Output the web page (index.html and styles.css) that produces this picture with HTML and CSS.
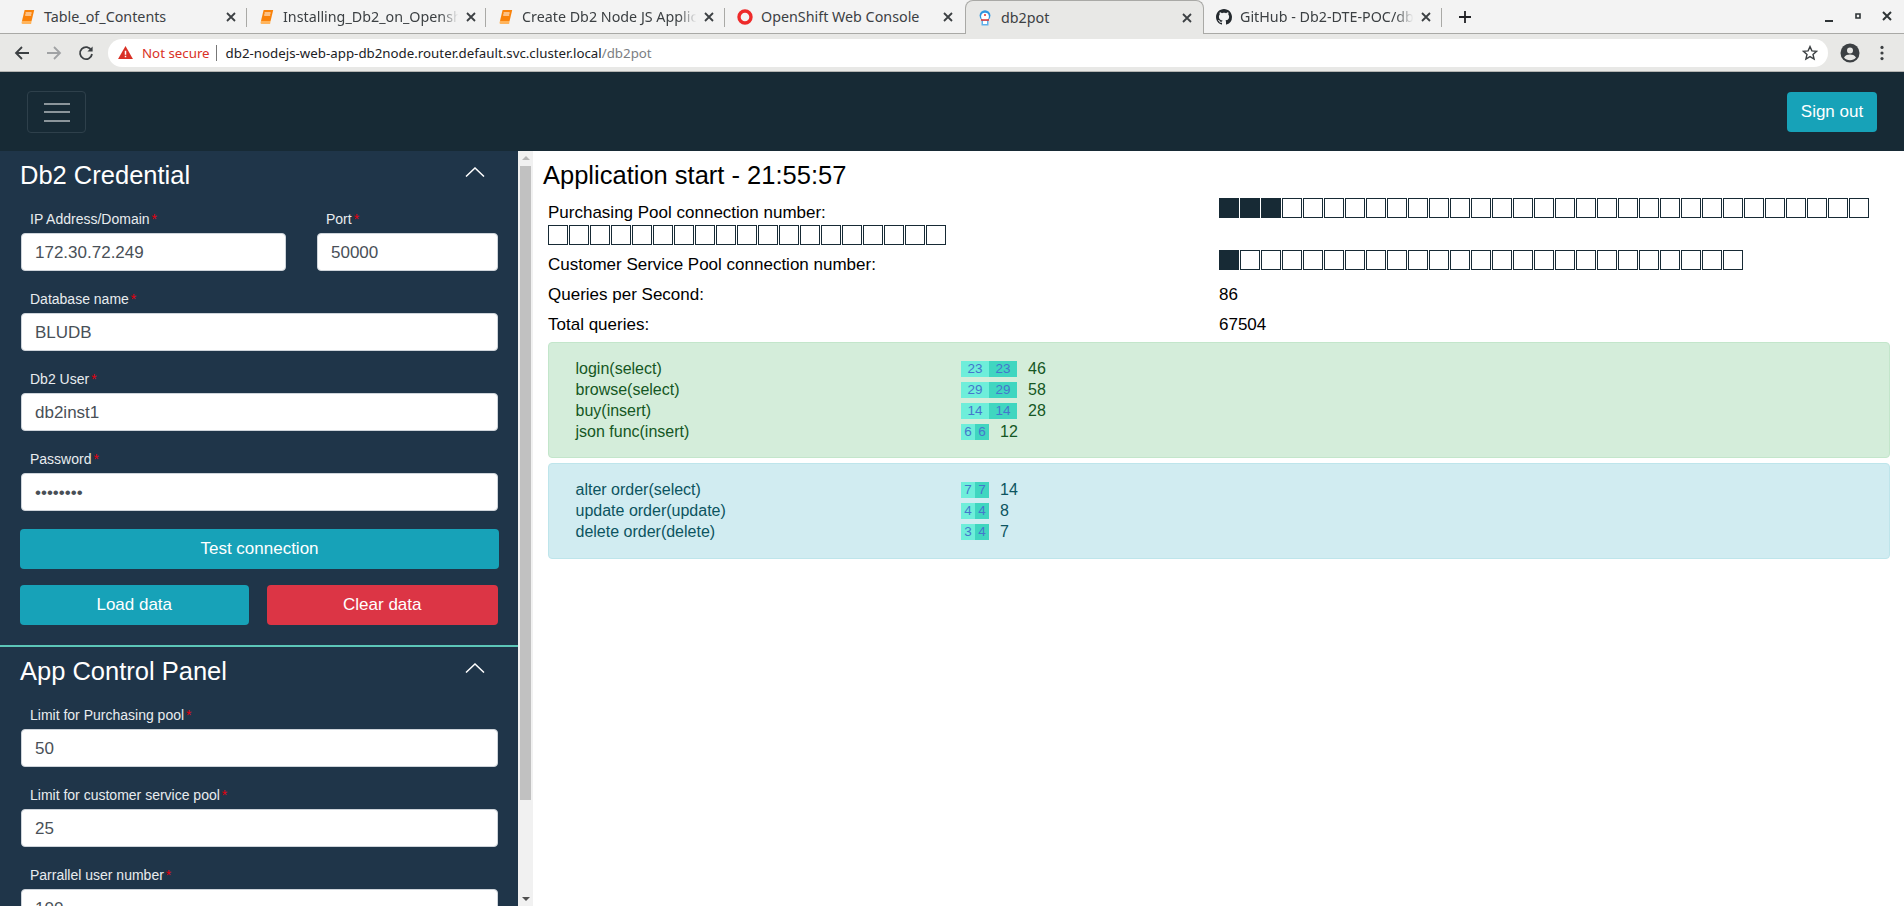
FILE: index.html
```html
<!DOCTYPE html>
<html lang="en">
<head>
  <meta charset="UTF-8" />
  <title>db2pot</title>
  <link rel="stylesheet" href="styles.css">
</head>
<body>
  <svg class="defs" width="0" height="0">
    <symbol id="book" viewBox="0 0 16 16">
      <path d="M4.600 1h9.600l-2.600 11H2z" fill="#f9820a"/>
      <path d="M2 12h9.600l-.5 3H2.600C1.400 15 1.300 13 2 12z" fill="#ffb45c"/>
      <path d="M5.600 4h6M5.200 6h6" stroke="#fff" stroke-width="1"/>
    </symbol>
    <symbol id="close" viewBox="0 0 10 10">
      <path d="M1 1l8 8M9 1l-8 8" stroke="#3c4043" stroke-width="1.800"/>
    </symbol>
    <symbol id="chevron" viewBox="0 0 20 10">
      <path d="M1 9.500L10 1l9 8.500" fill="none" stroke="#fff" stroke-width="1.500"/>
    </symbol>
  </svg>

  <div class="tabstrip">
    <div class="tab">
      <svg class="tab-icon"><use href="#book"/></svg>
      <span class="tab-title">Table_of_Contents</span>
      <svg class="tab-close"><use href="#close"/></svg>
    </div>
    <div class="tab">
      <svg class="tab-icon"><use href="#book"/></svg>
      <span class="tab-title tab-fade">Installing_Db2_on_Opensh</span>
      <svg class="tab-close"><use href="#close"/></svg>
    </div>
    <div class="tab">
      <svg class="tab-icon"><use href="#book"/></svg>
      <span class="tab-title tab-fade">Create Db2 Node JS Applic</span>
      <svg class="tab-close"><use href="#close"/></svg>
    </div>
    <div class="tab tab-nosep">
      <svg class="tab-icon" viewBox="0 0 16 16"><circle cx="8" cy="8" r="6" fill="none" stroke="#ee2a2a" stroke-width="3.400"/></svg>
      <span class="tab-title">OpenShift Web Console</span>
      <svg class="tab-close"><use href="#close"/></svg>
    </div>
    <div class="tab tab-active">
      <svg class="tab-icon" viewBox="0 0 16 16">
        <path d="M4.500 10h7v5.500h-7z" fill="#5fb0ea"/>
        <path d="M6 10.500h4V14H6z" fill="#fff"/>
        <circle cx="8" cy="5.600" r="5.400" fill="#2f96e0"/>
        <circle cx="8" cy="6.600" r="3.900" fill="#fff"/>
        <path d="M4 10h8" stroke="#e0312f" stroke-width="1.500"/>
        <circle cx="8" cy="5" r="1" fill="#e0312f"/>
      </svg>
      <span class="tab-title">db2pot</span>
      <svg class="tab-close"><use href="#close"/></svg>
    </div>
    <div class="tab tab-github">
      <svg class="tab-icon" viewBox="0 0 16 16"><path fill="#24292e" d="M8 0C3.58 0 0 3.58 0 8c0 3.54 2.29 6.53 5.47 7.59.4.07.55-.17.55-.38 0-.19-.01-.82-.01-1.49-2.01.37-2.53-.49-2.69-.94-.09-.23-.48-.94-.82-1.13-.28-.15-.68-.52-.01-.53.63-.01 1.08.58 1.23.82.72 1.21 1.87.87 2.33.66.07-.52.28-.87.51-1.07-1.78-.2-3.64-.89-3.64-3.95 0-.87.31-1.59.82-2.15-.08-.2-.36-1.02.08-2.12 0 0 .67-.21 2.2.82.64-.18 1.32-.27 2-.27.68 0 1.36.09 2 .27 1.53-1.04 2.2-.82 2.2-.82.44 1.1.16 1.92.08 2.12.51.56.82 1.27.82 2.15 0 3.07-1.87 3.75-3.65 3.95.29.25.54.73.54 1.48 0 1.07-.01 1.93-.01 2.2 0 .21.15.46.55.38A8.013 8.013 0 0016 8c0-4.42-3.58-8-8-8z"/></svg>
      <span class="tab-title tab-fade">GitHub - Db2-DTE-POC/db</span>
      <svg class="tab-close"><use href="#close"/></svg>
    </div>
    <svg class="new-tab" viewBox="0 0 12 12"><path d="M6 0v12M0 6h12" stroke="#202124" stroke-width="1.800"/></svg>
    <div class="window-controls">
      <svg class="win-min" viewBox="0 0 8 2"><path d="M0 1h8" stroke="#2e3436" stroke-width="2"/></svg>
      <svg class="win-max" viewBox="0 0 6 6"><path d="M1 1h4v4H1z" fill="none" stroke="#2e3436" stroke-width="1.600"/></svg>
      <svg class="win-close" viewBox="0 0 10 10"><path d="M1 1l8 8M9 1l-8 8" stroke="#2e3436" stroke-width="2"/></svg>
    </div>
  </div>

  <div class="toolbar">
    <svg class="nav-icon" viewBox="0 0 16 16"><path d="M15 8H2M8 2L2 8l6 6" fill="none" stroke="#3c4043" stroke-width="1.800"/></svg>
    <svg class="nav-icon" viewBox="0 0 16 16"><path d="M1 8h13M8 2l6 6-6 6" fill="none" stroke="#a0a2a4" stroke-width="1.800"/></svg>
    <svg class="nav-icon" viewBox="0 0 16 16"><path d="M13.400 5.400A6 6 0 1 0 14 9" fill="none" stroke="#3c4043" stroke-width="1.800"/><path d="M14.600 1.400v5.200H9.400z" fill="#3c4043"/></svg>
    <div class="urlbar">
      <svg class="warn-icon" viewBox="0 0 16 14"><path d="M8 0l8 14H0z" fill="#d93025"/><path d="M7.200 5h1.600v4.400H7.200zM7.200 10.400h1.600V12H7.200z" fill="#fff"/></svg>
      <span class="not-secure">Not secure</span>
      <span class="url-sep"></span>
      <span class="url">db2-nodejs-web-app-db2node.router.default.svc.cluster.local<span class="url-path">/db2pot</span></span>
      <svg class="star-icon" viewBox="0 0 16 16"><path d="M8 1.600l1.900 4.300 4.700.4-3.600 3.100 1.100 4.600L8 11.600 3.900 14 5 9.400 1.400 6.300l4.700-.4z" fill="none" stroke="#3c4043" stroke-width="1.400"/></svg>
    </div>
    <svg class="avatar-icon" viewBox="0 0 20 20"><circle cx="10" cy="10" r="9.500" fill="#3c4043"/><circle cx="10" cy="7.400" r="3" fill="#e8e8e6"/><path d="M4 14.400c1.400-2.400 3.800-3 6-3s4.600.6 6 3c-1.400 1.800-3.600 2.800-6 2.800s-4.600-1-6-2.800z" fill="#e8e8e6"/></svg>
    <svg class="menu-icon" viewBox="0 0 4 16"><circle cx="2" cy="2.400" r="1.600" fill="#3c4043"/><circle cx="2" cy="8" r="1.600" fill="#3c4043"/><circle cx="2" cy="13.600" r="1.600" fill="#3c4043"/></svg>
  </div>

  <nav class="navbar">
    <button class="toggler"><span></span><span></span><span></span></button>
    <button class="btn btn-info signout">Sign out</button>
  </nav>

  <div class="layout">
    <aside class="sidebar">
      <div class="sidebar-scroll">
        <section class="panel panel-credential">
          <div class="panel-head">
            <h3>Db2 Credential</h3>
            <svg class="chevron"><use href="#chevron"/></svg>
          </div>
          <div class="field-row">
            <div class="field field-ip">
              <label>IP Address/Domain<em>*</em></label>
              <input type="text" value="172.30.72.249" />
            </div>
            <div class="field field-port">
              <label>Port<em>*</em></label>
              <input type="text" value="50000" />
            </div>
          </div>
          <div class="field">
            <label>Database name<em>*</em></label>
            <input type="text" value="BLUDB" />
          </div>
          <div class="field">
            <label>Db2 User<em>*</em></label>
            <input type="text" value="db2inst1" />
          </div>
          <div class="field">
            <label>Password<em>*</em></label>
            <input type="password" value="password" />
          </div>
          <button class="btn btn-info btn-wide">Test connection</button>
          <div class="btn-row">
            <button class="btn btn-info btn-load">Load data</button>
            <button class="btn btn-danger btn-clear">Clear data</button>
          </div>
        </section>
        <section class="panel panel-control">
          <div class="panel-head">
            <h3>App Control Panel</h3>
            <svg class="chevron"><use href="#chevron"/></svg>
          </div>
          <div class="field">
            <label>Limit for Purchasing pool<em>*</em></label>
            <input type="text" value="50" />
          </div>
          <div class="field">
            <label>Limit for customer service pool<em>*</em></label>
            <input type="text" value="25" />
          </div>
          <div class="field">
            <label>Parrallel user number<em>*</em></label>
            <input type="text" value="100" />
          </div>
        </section>
      </div>
      <div class="scrollbar">
        <span class="arrow-up"></span>
        <span class="thumb"></span>
        <span class="arrow-down"></span>
      </div>
    </aside>

    <main class="content">
      <h3 class="app-title">Application start - 21:55:57</h3>

      <div class="stat stat-purchasing">
        <div class="stat-left">
          <div class="stat-label">Purchasing Pool connection number:</div>
          <div class="boxes" id="poolOverflow"></div>
        </div>
        <div class="stat-right"><div class="boxes" id="poolMain"></div></div>
      </div>
      <div class="stat stat-text">
        <div class="stat-left">Customer Service Pool connection number:</div>
        <div class="stat-right"><div class="boxes" id="poolService"></div></div>
      </div>
      <div class="stat stat-text">
        <div class="stat-left">Queries per Second:</div>
        <div class="stat-right">86</div>
      </div>
      <div class="stat stat-text">
        <div class="stat-left">Total queries:</div>
        <div class="stat-right">67504</div>
      </div>

      <div class="alert alert-success">
        <div class="tx-row"><span class="tx-name">login(select)</span><span class="cell cell-w light">23</span><span class="cell cell-w dark">23</span><span class="tx-total">46</span></div>
        <div class="tx-row"><span class="tx-name">browse(select)</span><span class="cell cell-w light">29</span><span class="cell cell-w dark">29</span><span class="tx-total">58</span></div>
        <div class="tx-row"><span class="tx-name">buy(insert)</span><span class="cell cell-w light">14</span><span class="cell cell-w dark">14</span><span class="tx-total">28</span></div>
        <div class="tx-row"><span class="tx-name">json func(insert)</span><span class="cell light">6</span><span class="cell dark">6</span><span class="tx-total">12</span></div>
      </div>

      <div class="alert alert-info">
        <div class="tx-row"><span class="tx-name">alter order(select)</span><span class="cell light">7</span><span class="cell dark">7</span><span class="tx-total">14</span></div>
        <div class="tx-row"><span class="tx-name">update order(update)</span><span class="cell light">4</span><span class="cell dark">4</span><span class="tx-total">8</span></div>
        <div class="tx-row"><span class="tx-name">delete order(delete)</span><span class="cell light">3</span><span class="cell dark">4</span><span class="tx-total">7</span></div>
      </div>
    </main>
  </div>

  <script>
    function drawBoxes(id, total, used) {
      const holder = document.getElementById(id);
      for (let i = 0; i < total; i++) {
        const box = document.createElement('span');
        box.className = i < used ? 'box box-used' : 'box';
        holder.appendChild(box);
      }
    }

    drawBoxes('poolMain', 31, 3);
    drawBoxes('poolOverflow', 19, 0);
    drawBoxes('poolService', 25, 1);
  </script>
</body>
</html>
```

FILE: styles.css
```css
* {
  box-sizing: border-box;
}

html, body {
  height: 906px;
  margin: 0;
  overflow: hidden;
}

body {
  font-family: 'Liberation Sans', Arial, sans-serif;
  font-size: 16px;
  color: #212529;
  background: #fff;
}

.defs {
  position: absolute;
}

/* browser chrome */
.tabstrip {
  display: flex;
  align-items: center;
  height: 34px;
  padding-left: 9px;
  background: #f3f3f3;
  border-bottom: 1px solid #a9a9a6;
  font-family: 'Noto Sans', sans-serif;
  font-size: 14.300px;
  color: #3c4043;
}

.tab {
  display: flex;
  align-items: center;
  width: 239px;
  height: 33px;
  padding: 0 11px;
  border-right: 1px solid transparent;
  position: relative;
}

.tab::after {
  content: "";
  position: absolute;
  right: 0;
  top: 8px;
  height: 19px;
  width: 1px;
  background: #a9a9a6;
}

.tab-nosep::after,
.tab-active::after {
  display: none;
}

.tab-active {
  height: 34px;
  margin-bottom: -1px;
  background: #e8e8e6;
  border: 1px solid #a9a9a6;
  border-bottom: none;
  border-radius: 8px 8px 0 0;
}

.tab-icon {
  flex: none;
  width: 16px;
  height: 16px;
  margin-right: 8px;
}

.tab-github .tab-icon {
  margin-left: 1px;
}

.tab-title {
  flex: 1;
  white-space: nowrap;
}

.tab-fade {
  -webkit-mask-image: linear-gradient(to right, #000 88%, transparent 98%);
  mask-image: linear-gradient(to right, #000 88%, transparent 98%);
}

.tab-close {
  flex: none;
  width: 10px;
  height: 10px;
  margin-left: 4px;
}

.new-tab {
  width: 12px;
  height: 12px;
  margin-left: 16px;
}

.window-controls {
  display: flex;
  align-items: center;
  margin-left: auto;
  padding-right: 12px;
}

.win-min {
  width: 8px;
  height: 2px;
  margin-top: 8px;
}

.win-max {
  width: 6px;
  height: 6px;
  margin-left: 22px;
  margin-top: -2px;
}

.win-close {
  width: 10px;
  height: 10px;
  margin-left: 21px;
  margin-top: -2px;
}

.toolbar {
  display: flex;
  align-items: center;
  height: 38px;
  padding-left: 14px;
  background: #e8e8e6;
  border-bottom: 1px solid #b4b4b2;
}

.nav-icon {
  width: 16px;
  height: 16px;
  margin-right: 16px;
}

.urlbar {
  display: flex;
  align-items: center;
  width: 1720px;
  height: 28px;
  margin-left: -2px;
  padding: 0 0 0 10px;
  background: #fff;
  border-radius: 14px;
  font-family: 'Noto Sans', sans-serif;
  font-size: 13.300px;
  color: #202124;
}

.warn-icon {
  width: 15px;
  height: 13px;
  margin-right: 9px;
}

.not-secure {
  color: #d93025;
}

.url-sep {
  width: 1px;
  height: 16px;
  margin: 0 9px 0 6px;
  background: #777;
}

.url-path {
  color: #7b7e82;
}

.star-icon {
  width: 16px;
  height: 16px;
  margin-left: auto;
  margin-right: 10px;
}

.avatar-icon {
  width: 20px;
  height: 20px;
  margin-left: 12px;
}

.menu-icon {
  width: 4px;
  height: 16px;
  margin-left: 20px;
}

/* app */
.navbar {
  display: flex;
  align-items: center;
  justify-content: space-between;
  height: 79px;
  padding: 0 27px;
  background: #172a35;
}

.toggler {
  display: flex;
  flex-direction: column;
  align-items: center;
  gap: 6.500px;
  width: 59px;
  height: 42px;
  padding: 11px 0 0;
  background: none;
  border: 1px solid #2e404b;
  border-radius: 4px;
}

.toggler span {
  display: block;
  width: 26px;
  height: 2px;
  background: #8b959b;
}

.btn {
  height: 40px;
  font-family: inherit;
  font-size: 17px;
  color: #fff;
  border: none;
  border-radius: 4px;
}

.btn-info {
  background: #17a2b8;
}

.btn-danger {
  background: #dc3545;
}

.signout {
  width: 90px;
}

.layout {
  display: flex;
  height: 755px;
}

.sidebar {
  flex: none;
  display: flex;
  width: 533px;
  height: 755px;
  overflow: hidden;
}

.sidebar-scroll {
  width: 518px;
  background: #1f3549;
  color: #e8ecef;
}

.panel {
  padding: 0 20px 0 21px;
}

.panel-credential {
  padding-bottom: 20px;
  border-bottom: 2px solid #5cc6b8;
}

.panel-head {
  display: flex;
  align-items: center;
  justify-content: space-between;
  height: 48px;
  margin-bottom: 9px;
  padding-right: 13px;
}

.panel-head h3 {
  margin: 0 0 0 -1px;
  font-size: 25.500px;
  font-weight: 400;
  color: #fff;
}

.chevron {
  width: 20px;
  height: 10px;
  margin-top: -6px;
}

.field-row {
  display: flex;
  gap: 31px;
}

.field {
  margin-bottom: 17px;
}

.field-ip {
  width: 265px;
}

.field-port {
  flex: 1;
}

.field label {
  display: block;
  height: 21px;
  margin-bottom: 4px;
  padding-left: 9px;
  font-size: 14px;
  line-height: 23px;
}

.field em {
  margin-left: 2px;
  font-style: normal;
  color: #e6000f;
}

.field input {
  display: block;
  width: 100%;
  height: 38px;
  padding: 1px 13px 0;
  font-family: inherit;
  font-size: 17px;
  color: #495057;
  background: #fff;
  border: 1px solid #ced4da;
  border-radius: 4px;
}

.btn-wide {
  display: block;
  width: 479px;
  margin-left: -1px;
  margin-top: 18px;
}

.btn-row {
  display: flex;
  margin-left: -1px;
  margin-top: 16px;
  gap: 18px;
}

.btn-load {
  width: 229px;
}

.btn-clear {
  width: 232px;
}

.scrollbar {
  position: relative;
  width: 15px;
  background: #f1f1f1;
  border-left: 2px solid #f1f1f1;
}

.thumb {
  position: absolute;
  left: 0;
  top: 15px;
  width: 11px;
  height: 634px;
  background: #c1c1c1;
}

.arrow-up,
.arrow-down {
  position: absolute;
  left: 2px;
  width: 0;
  height: 0;
  border-left: 4px solid transparent;
  border-right: 4px solid transparent;
}

.arrow-up {
  top: 5px;
  border-bottom: 4px solid #b5b5b5;
}

.arrow-down {
  bottom: 5px;
  border-top: 4px solid #505050;
}

/* main column */
.content {
  flex: 1;
  padding: 0 15px 0 10px;
}

.app-title {
  margin: 0;
  height: 47px;
  font-size: 25.500px;
  font-weight: 400;
  line-height: 48px;
  color: #000;
}

.stat {
  display: flex;
  margin-left: 5px;
  font-size: 17px;
  color: #000;
}

.stat-left {
  width: 671px;
  flex: none;
}

.stat-right {
  flex: 1;
}

.stat-purchasing {
  height: 52px;
}

.stat-label {
  height: 27px;
  line-height: 29px;
}

.stat-text {
  height: 30px;
  line-height: 29px;
}

.boxes {
  display: flex;
  flex-wrap: wrap;
  gap: 1px;
}

.box {
  width: 20px;
  height: 20px;
  background: #fff;
  border: 1px solid #172a35;
}

.box-used {
  background: #172a35;
}

.alert {
  margin-left: 5px;
  margin-right: -1px;
  padding: 15px 26.500px;
  border: 1px solid;
  border-radius: 4px;
}

.alert-success {
  height: 116px;
  margin-top: 2px;
  color: #155724;
  background: #d4edda;
  border-color: #c3e6cb;
}

.alert-info {
  height: 96px;
  margin-top: 5px;
  color: #0c5460;
  background: #d1ecf1;
  border-color: #bee5eb;
}

.tx-row {
  display: flex;
  align-items: center;
  height: 21px;
}

.tx-name {
  width: 385.500px;
  flex: none;
}

.cell {
  width: 14px;
  height: 16px;
  font-size: 13.500px;
  line-height: 16px;
  text-align: center;
  color: #4477cc;
}

.cell-w {
  width: 28px;
}

.light {
  background: #6eeeda;
}

.dark {
  background: #40d6c0;
}

.tx-total {
  margin-left: 11px;
}
```
